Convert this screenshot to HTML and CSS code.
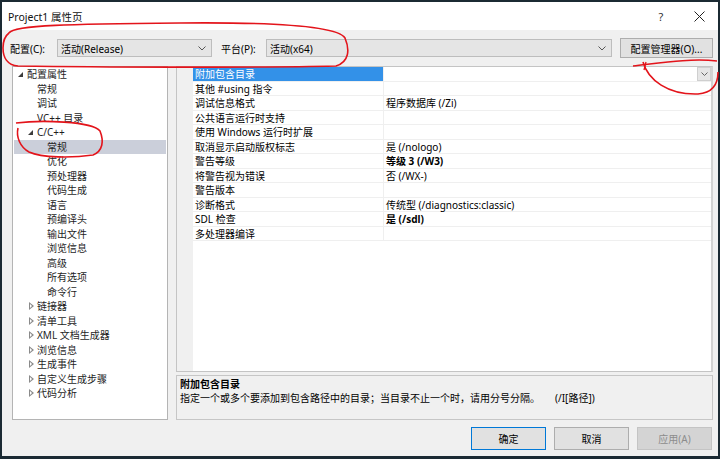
FILE: index.html
```html
<!DOCTYPE html>
<html lang="zh-CN">
<head>
  <meta charset="UTF-8" />
  <title>Project1 属性页</title>
  <link rel="stylesheet" href="styles.css">
</head>
<body>
<div class="window">

  <!-- title bar -->
  <div class="titlebar">
    <span class="title">Project1 属性页</span>
    <span class="help">?</span>
    <span class="close">
      <svg width="11" height="11" viewBox="0 0 11 11"><path d="M0.5 0.5 L10.5 10.5 M10.5 0.5 L0.5 10.5" stroke="#222" stroke-width="1" fill="none"/></svg>
    </span>
  </div>

  <!-- config / platform -->
  <div class="toolbar">
    <span class="lbl lbl-config">配置(C):</span>
    <div class="combo combo-config">
      <span>活动(Release)</span>
      <svg class="chev" width="8" height="5" viewBox="0 0 8 5"><path d="M0.5 0.5 L4 4 L7.5 0.5" stroke="#555" fill="none"/></svg>
    </div>
    <span class="lbl lbl-platform">平台(P):</span>
    <div class="combo combo-platform">
      <span>活动(x64)</span>
      <svg class="chev" width="8" height="5" viewBox="0 0 8 5"><path d="M0.5 0.5 L4 4 L7.5 0.5" stroke="#555" fill="none"/></svg>
    </div>
    <button class="btn btn-manager">配置管理器(O)...</button>
  </div>

  <div class="main">
    <!-- tree -->
    <div class="tree">
      <div class="row lv0"><i class="tw open"></i>配置属性</div>
      <div class="row lv1"><i class="tw"></i>常规</div>
      <div class="row lv1"><i class="tw"></i>调试</div>
      <div class="row lv1"><i class="tw"></i>VC++ 目录</div>
      <div class="row lv1"><i class="tw open"></i>C/C++</div>
      <div class="row lv2 selected"><i class="tw"></i>常规</div>
      <div class="row lv2"><i class="tw"></i>优化</div>
      <div class="row lv2"><i class="tw"></i>预处理器</div>
      <div class="row lv2"><i class="tw"></i>代码生成</div>
      <div class="row lv2"><i class="tw"></i>语言</div>
      <div class="row lv2"><i class="tw"></i>预编译头</div>
      <div class="row lv2"><i class="tw"></i>输出文件</div>
      <div class="row lv2"><i class="tw"></i>浏览信息</div>
      <div class="row lv2"><i class="tw"></i>高级</div>
      <div class="row lv2"><i class="tw"></i>所有选项</div>
      <div class="row lv2"><i class="tw"></i>命令行</div>
      <div class="row lv1"><i class="tw closed"></i>链接器</div>
      <div class="row lv1"><i class="tw closed"></i>清单工具</div>
      <div class="row lv1"><i class="tw closed"></i>XML 文档生成器</div>
      <div class="row lv1"><i class="tw closed"></i>浏览信息</div>
      <div class="row lv1"><i class="tw closed"></i>生成事件</div>
      <div class="row lv1"><i class="tw closed"></i>自定义生成步骤</div>
      <div class="row lv1"><i class="tw closed"></i>代码分析</div>
    </div>

    <div class="right">
      <!-- property grid -->
      <div class="grid">
        <div class="gutter"></div>
        <div class="props">
          <div class="name active">附加包含目录</div>
          <div class="value"><span class="dd"><svg width="7" height="4" viewBox="0 0 7 4"><path d="M0.5 0.5 L3.5 3.5 L6.5 0.5" stroke="#666" fill="none"/></svg></span></div>
          <div class="name">其他 #using 指令</div><div class="value"></div>
          <div class="name">调试信息格式</div><div class="value">程序数据库 (/Zi)</div>
          <div class="name">公共语言运行时支持</div><div class="value"></div>
          <div class="name">使用 Windows 运行时扩展</div><div class="value"></div>
          <div class="name">取消显示启动版权标志</div><div class="value">是 (/nologo)</div>
          <div class="name">警告等级</div><div class="value bold">等级 3 (/W3)</div>
          <div class="name">将警告视为错误</div><div class="value">否 (/WX-)</div>
          <div class="name">警告版本</div><div class="value"></div>
          <div class="name">诊断格式</div><div class="value">传统型 (/diagnostics:classic)</div>
          <div class="name">SDL 检查</div><div class="value bold">是 (/sdl)</div>
          <div class="name">多处理器编译</div><div class="value"></div>
        </div>
      </div>

      <!-- description -->
      <div class="desc">
        <div class="desc-title">附加包含目录</div>
        <div class="desc-text">指定一个或多个要添加到包含路径中的目录；当目录不止一个时，请用分号分隔。<span class="switch">(/I[路径])</span></div>
      </div>
    </div>
  </div>

  <div class="footer">
    <button class="btn btn-ok">确定</button>
    <button class="btn">取消</button>
    <button class="btn btn-disabled">应用(A)</button>
  </div>

  <!-- red pen marks drawn over the screenshot -->
  <svg class="marks" width="720" height="459" viewBox="0 0 720 459">
    <path d="M9 33 C 14 25, 70 24, 180 23 C 280 22, 338 27, 345 38 C 350 50, 349 62, 336 66 C 250 68, 90 67, 18 66 C 7 65, 3 57, 3 48 C 3 41, 5 36, 9 33" stroke="#e3141b" stroke-width="1.6" fill="none"/>
    <path d="M16 123 C 40 120, 92 121, 100 131 C 104 141, 103 151, 93 155 C 72 158, 42 158, 29 152 C 20 147, 16 137, 18 128" stroke="#e3141b" stroke-width="1.6" fill="none"/>
    <path d="M633 66 C 660 63, 690 58, 717 61" stroke="#e3141b" stroke-width="1.5" fill="none"/>
    <path d="M643 62 C 648 80, 668 95, 698 94 C 711 93, 718 86, 718 72" stroke="#e3141b" stroke-width="1.6" fill="none"/>
    <path d="M646 62 L 644 70" stroke="#e3141b" stroke-width="1.3" fill="none"/>
  </svg>
</div>
</body>
</html>
```

FILE: styles.css
```css
* {
  margin: 0;
  padding: 0;
  box-sizing: border-box;
}

body {
  width: 720px;
  height: 459px;
  overflow: hidden;
  font-family: "Noto Sans", "Noto Sans CJK SC", sans-serif;
  font-size: 10px;
  color: #000;
  background: #1b2a33;
}

.window {
  position: relative;
  width: 720px;
  height: 459px;
  background-color: #f0f0f0;
  border: 2px solid #1b2a33;
  border-bottom-width: 3px;
  display: flex;
  flex-direction: column;
}

/* Title bar */
.titlebar {
  height: 28px;
  background-color: #fff;
  display: flex;
  align-items: center;
  padding-left: 6px;
  flex: none;
}

.title {
  font-size: 10.5px;
  color: #111;
}

.help {
  margin-left: auto;
  width: 38px;
  text-align: center;
  font-size: 11px;
  color: #333;
}

.close {
  width: 38px;
  display: flex;
  justify-content: center;
}

/* Toolbar */
.toolbar {
  display: flex;
  align-items: center;
  height: 36px;
  padding: 0 5px 0 8px;
  flex: none;
}

.lbl {
  flex: none;
  white-space: nowrap;
}

.lbl-config { width: 47px; }

.lbl-platform {
  width: 45px;
  margin-left: 9px;
}

.combo {
  height: 18px;
  background-color: #e5e5e5;
  border: 1px solid #bdbdbd;
  display: flex;
  align-items: center;
  padding-left: 3px;
  padding-right: 5px;
}

.combo span { flex: 1; }

.combo-config { width: 155px; }

.combo-platform { flex: 1; }

.chev { flex: none; }

.btn {
  font-family: inherit;
  font-size: 10px;
  color: #000;
  background-color: #e1e1e1;
  border: 1px solid #adadad;
  height: 23px;
  width: 75px;
}

.btn-manager {
  width: 93px;
  height: 20px;
  margin-left: 8px;
}

/* Main area */
.main {
  flex: 1;
  display: flex;
  gap: 8px;
  padding: 0 5px 0 10px;
  min-height: 0;
}

.tree {
  width: 156px;
  flex: none;
  background-color: #fff;
  border: 1px solid #b4b4b4;
  padding: 0 1px;
  color: #1e1e1e;
}

.row {
  height: 14.5px;
  line-height: 14.5px;
  display: flex;
  align-items: center;
  white-space: nowrap;
}

.lv0 { padding-left: 2px; }
.lv1 { padding-left: 12px; }
.lv2 { padding-left: 22px; }

.row.selected {
  background-color: #cbcfda;
}

.tw {
  width: 11px;
  height: 14.5px;
  flex: none;
  position: relative;
}

.tw.open::after {
  content: "";
  position: absolute;
  left: 2px;
  top: 5px;
  border-left: 5px solid transparent;
  border-bottom: 5px solid #3c3c3c;
}

.tw.closed::after {
  content: "";
  position: absolute;
  left: 3px;
  top: 3px;
  width: 0;
  height: 0;
  border-top: 4px solid transparent;
  border-bottom: 4px solid transparent;
  border-left: 5px solid #8a8a8a;
}

.tw.closed::before {
  content: "";
  position: absolute;
  left: 4px;
  top: 5px;
  width: 0;
  height: 0;
  border-top: 2px solid transparent;
  border-bottom: 2px solid transparent;
  border-left: 2.5px solid #fff;
  z-index: 1;
}

.right {
  flex: 1;
  display: flex;
  flex-direction: column;
  gap: 3px;
}

/* Property grid */
.grid {
  height: 307px;
  display: flex;
  background-color: #fff;
  border: 1px solid #c4c4c4;
  border-right: 2px solid #d2d2d2;
}

.gutter {
  width: 16px;
  background-color: #f0f0f0;
  flex: none;
}

.props {
  flex: 1;
  display: grid;
  grid-template-columns: 191px 1fr;
  grid-auto-rows: 14.5px;
  align-content: start;
}

.name, .value {
  line-height: 14px;
  border-bottom: 0.5px solid #efefef;
  padding-left: 2px;
  white-space: nowrap;
}

.name {
  border-right: 1px solid #efefef;
}

.name.active {
  background-color: #3391e8;
  color: #fff;
}

.value {
  display: flex;
}

.value.bold {
  font-weight: bold;
}

.dd {
  margin-left: auto;
  width: 14px;
  height: 14px;
  background-color: #e6e6e6;
  border: 1px solid #cfcfcf;
  display: flex;
  align-items: center;
  justify-content: center;
}

/* Description */
.desc {
  height: 45px;
  border: 1px solid #c6c6c6;
  background-color: #f0f0f0;
  padding: 1px 3px;
}

.desc-title {
  font-weight: bold;
  line-height: 14px;
}

.desc-text {
  line-height: 15px;
  white-space: nowrap;
}

.switch {
  margin-left: 15px;
}

/* Footer */
.footer {
  height: 36px;
  flex: none;
  display: flex;
  justify-content: flex-end;
  gap: 8px;
  padding: 7px 6px 0 0;
}

.btn-ok {
  border-color: #0078d7;
}

.btn-disabled {
  background-color: #d4d4d4;
  border-color: #c4c4c4;
  color: #8c8c8c;
}

/* pen marks */
.marks {
  position: absolute;
  left: -2px;
  top: -2px;
  pointer-events: none;
}
```
